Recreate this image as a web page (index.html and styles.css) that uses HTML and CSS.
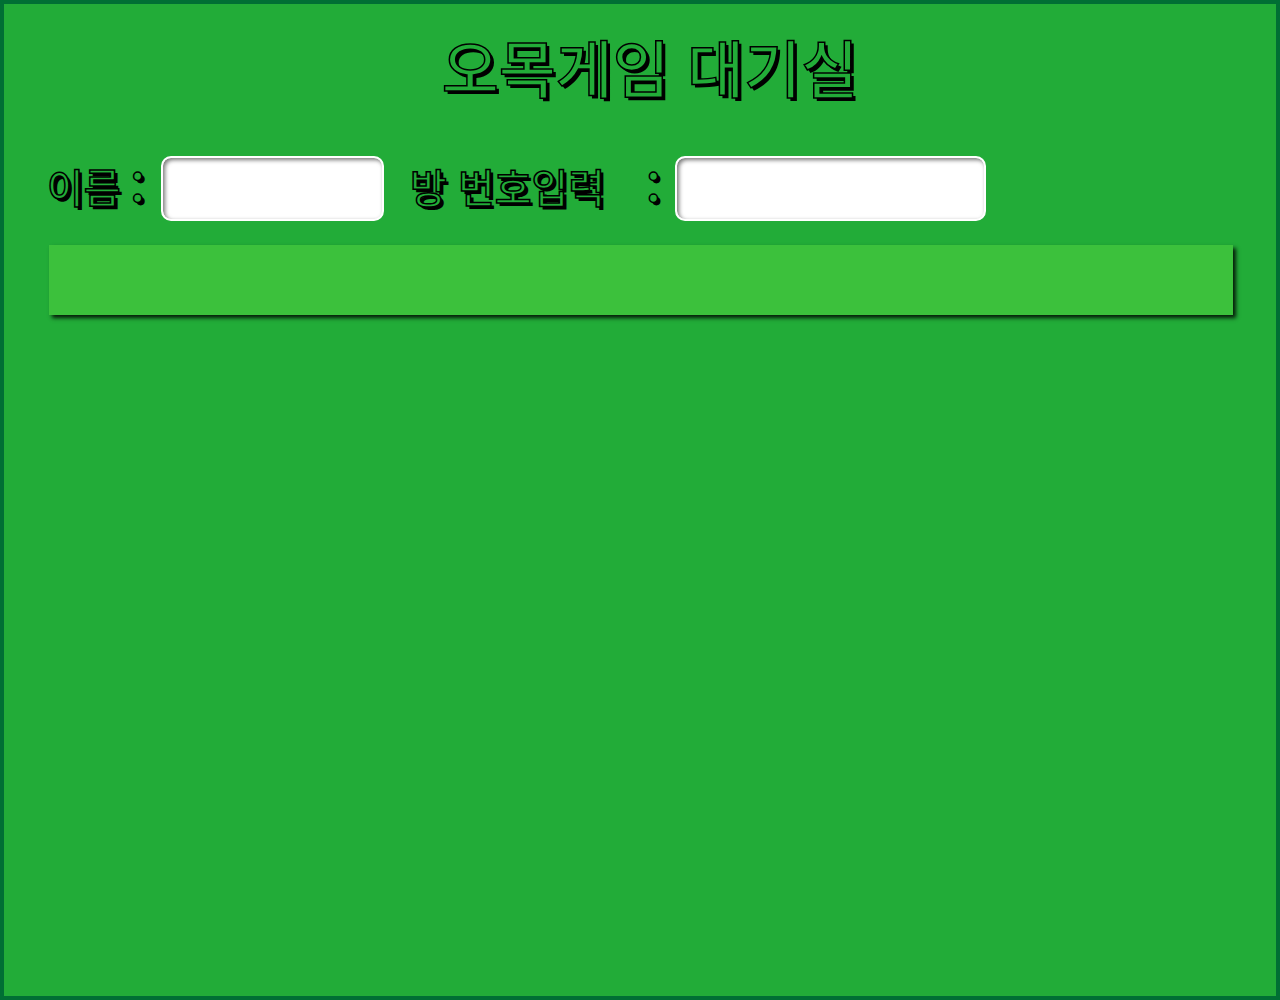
FILE: index.html
```html
<!DOCTYPE html>
<html lang="ko">
<head>
<meta charset="utf-8">
<title>오목게임 대기실</title>
<link rel="stylesheet" href="styles.css">
</head>
<body>
<div class="page">
  <h1 class="title">오목게임 대기실</h1>
  <div class="form-row">
    <span class="label">이름</span>
    <span class="label colon colon-name">:</span>
    <input class="field field-name" type="text">
    <span class="label label-room">방 번호입력</span>
    <span class="label colon colon-room">:</span>
    <input class="field field-room" type="text">
  </div>
  <div class="room-bar"></div>
</div>
</body>
</html>
```
FILE: styles.css
```css
html, body {
  margin: 0;
  padding: 0;
}
body {
  background: #22ac38;
}
.page {
  box-sizing: border-box;
  width: 1280px;
  height: 1000px;
  border: 4px solid #006f34;
  background: #22ac38;
  font-family: "Noto Sans CJK KR", "Noto Sans", sans-serif;
  font-weight: 500;
}
.title, .label {
  color: #22ac38;
  -webkit-text-stroke: 1.5px #000;
  text-shadow: 3px 3px 0 #000;
}
.title {
  margin: 0;
  padding: 17px 0 3px 20px;
  text-align: center;
  font-size: 62px;
  font-weight: 500;
  line-height: 90px;
}
.form-row {
  display: flex;
  align-items: center;
  padding: 42px 0 0 43px;
  height: 65px;
}
.label {
  font-size: 40px;
  line-height: 60px;
  padding-bottom: 5px;
  white-space: pre;
}
.colon {
  font-size: 44px;
  font-weight: 700;
}
.colon-name {
  margin-left: 10px;
}
.colon-room {
  margin-left: 41px;
}
.label-room {
  margin-left: 26px;
}
.field {
  box-sizing: border-box;
  height: 65px;
  border: 2px solid #fff;
  border-radius: 10px;
  background: #fff;
  box-shadow: inset 2px 2px 4px #777;
  outline: none;
  margin-left: 16px;
}
.field-name {
  width: 223px;
}
.field-room {
  width: 311px;
  margin-left: 14px;
}
.room-bar {
  margin: 24px 43px 0 45px;
  height: 70px;
  background: #3cc13c;
  box-shadow: 3px 3px 4px rgba(0, 0, 0, 0.85);
}
```
